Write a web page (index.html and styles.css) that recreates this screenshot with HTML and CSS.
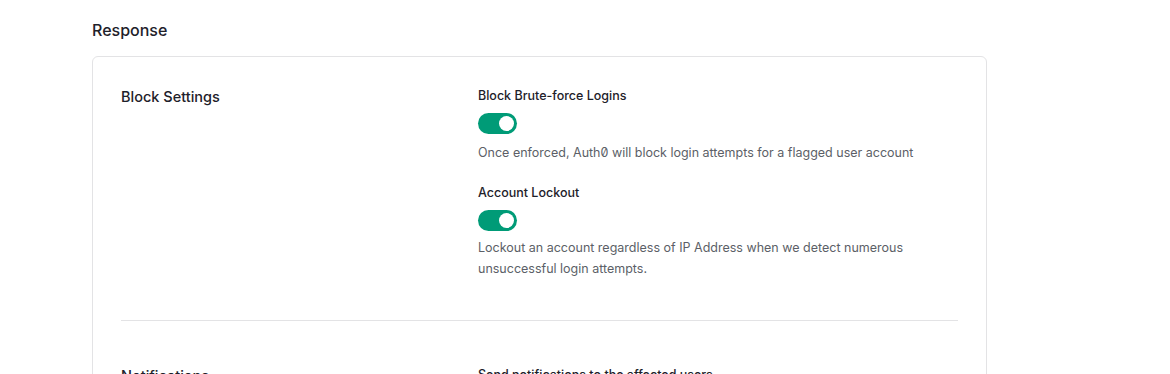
FILE: index.html
```html
<!DOCTYPE html>
<html lang="en">
<head>
<meta charset="utf-8">
<title>Response</title>
<link rel="stylesheet" href="styles.css">
</head>
<body>
<main class="page">
  <h2 class="section-title">Response</h2>
  <section class="card">
    <div class="row">
      <h3 class="row-title">Block Settings</h3>
      <div class="row-body">
        <div class="setting">
          <div class="setting-label">Block Brute-force Logins</div>
          <span class="toggle on"><span class="knob"></span></span>
          <p class="setting-desc">Once enforced, Auth0 will block login attempts for a flagged user account</p>
        </div>
        <div class="setting">
          <div class="setting-label">Account Lockout</div>
          <span class="toggle on"><span class="knob"></span></span>
          <p class="setting-desc tight narrow">Lockout an account regardless of IP Address when we detect numerous unsuccessful login attempts.</p>
        </div>
      </div>
    </div>
    <hr class="divider">
    <div class="row">
      <h3 class="row-title">Notifications</h3>
      <div class="row-body">
        <div class="setting">
          <div class="setting-label">Send notifications to the affected users</div>
          <span class="toggle on"><span class="knob"></span></span>
        </div>
      </div>
    </div>
  </section>
</main>
</body>
</html>
```
FILE: styles.css
```css
* { box-sizing: border-box; }
html, body { margin: 0; padding: 0; background: #fff; }
body {
  font-family: Inter, "Noto Sans", "Liberation Sans", sans-serif;
  color: #1e212a;
  font-feature-settings: "zero" 1;
  -webkit-font-smoothing: antialiased;
}
.page {
  padding: 19px 0 0 92px;
  width: 987px;
}
.section-title {
  margin: 0 0 15px;
  font-size: 16px;
  line-height: 22px;
  font-weight: 500;
  color: #1e212a;
}
.card {
  border: 1px solid #e3e3e5;
  border-radius: 6px;
  padding: 29px 28px 40px;
}
.row {
  display: grid;
  grid-template-columns: 357px 1fr;
}
.row-title {
  margin: 0;
  font-size: 14.5px;
  line-height: 22px;
  font-weight: 500;
  color: #1e212a;
}
.setting { display: flex; flex-direction: column; align-items: flex-start; }
.setting + .setting { margin-top: 20px; }
.setting-label {
  font-size: 12.5px;
  line-height: 20px;
  font-weight: 500;
  color: #1e212a;
  margin-bottom: 7px;
}
.toggle {
  display: inline-flex;
  align-items: center;
  width: 39px;
  height: 21px;
  border-radius: 11px;
  background: #cfd1d6;
  padding: 0 3px;
}
.toggle.on { background: #009b77; justify-content: flex-end; }
.knob {
  width: 15px;
  height: 15px;
  border-radius: 50%;
  background: #fff;
}
.setting-desc {
  margin: 8px 0 0;
  font-size: 12.5px;
  line-height: 21px;
  color: #5c5f67;
}
.setting-desc.tight { margin-top: 6px; }
.narrow { max-width: 440px; }
.divider {
  border: 0;
  border-top: 1px solid #e3e3e5;
  margin: 41px 0 44px;
}
```
